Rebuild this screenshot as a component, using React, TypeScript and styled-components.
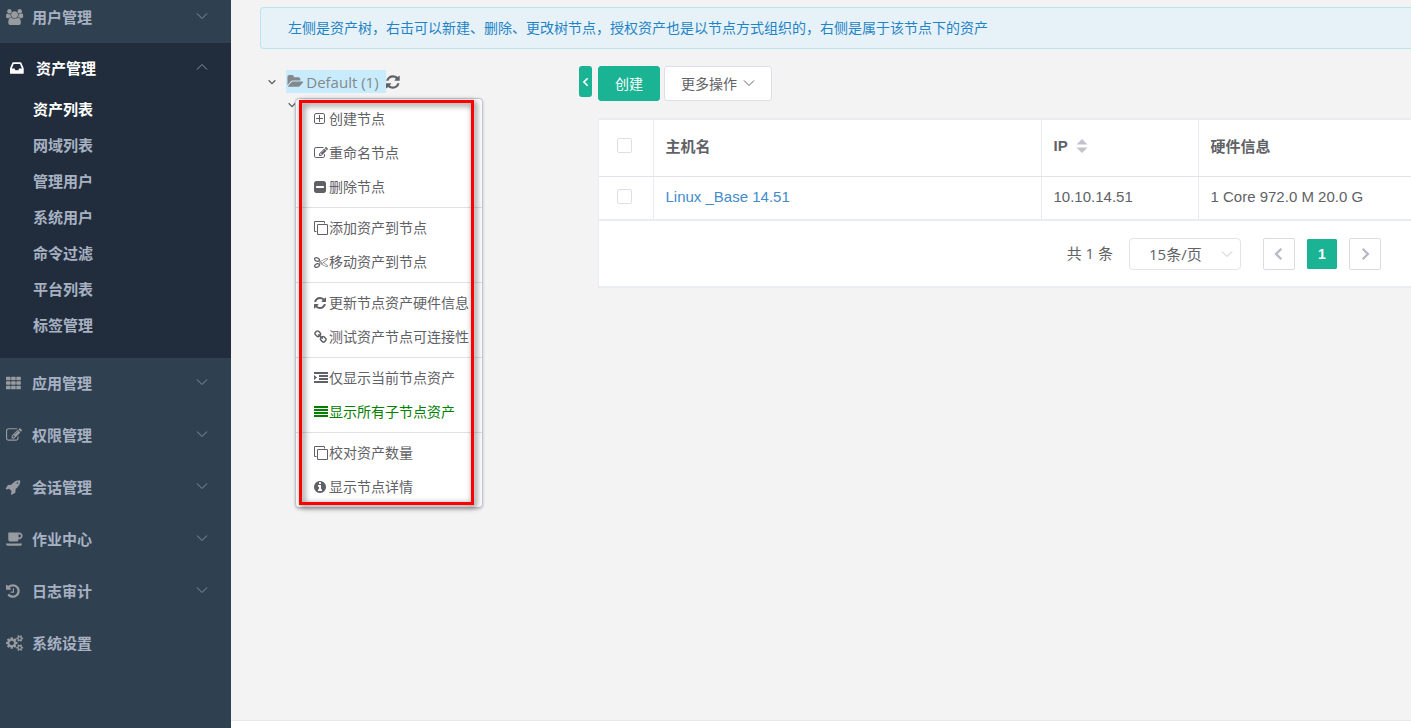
import React, { useState } from "react";
import styled, { createGlobalStyle, css } from "styled-components";

const GlobalStyle = createGlobalStyle`
  *, *::before, *::after { box-sizing: border-box; }
  body {
    margin: 0;
    background: #f3f3f3;
    color: #606266;
    font-family: "Open Sans", "Noto Sans CJK SC", sans-serif;
    font-size: 14px;
  }
  button, select, input { font: inherit; color: inherit; }
  button { cursor: pointer; }
  ul { list-style: none; margin: 0; padding: 0; }
`;

/* ---------- icons ---------- */

type Glyph = { x?: number; w: number; d: string };

const glyphs = {
  users: {
    w: 1920,
    d: "M593 896q-162 5-265 128h-134q-82 0-138-40.5t-56-118.5q0-353 124-353 6 0 43.5 21t97.5 42.5 119 21.5q67 0 133-23-5 37-5 66 0 159 90 293zm1071 637q0 120-73 189.5t-194 69.5h-874q-121 0-194-69.5t-73-189.5q0-53 3.5-103.5t14-109 26.5-108.5 43-97.5 62-81 85.5-53.5 111.5-20q10 0 43 21.5t73 48 107 48 135 21.5 135-21.5 107-48 73-48 43-21.5q61 0 111.5 20t85.5 53.5 62 81 43 97.5 26.5 108.5 14 109 3.5 103.5zm-1024-1277q0 106-75 181t-181 75-181-75-75-181 75-181 181-75 181 75 75 181zm704 384q0 159-112.5 271.5t-271.5 112.5-271.5-112.5-112.5-271.5 112.5-271.5 271.5-112.5 271.5 112.5 112.5 271.5zm576 225q0 78-56 118.5t-138 40.5h-134q-103-123-265-128 90-134 90-293 0-29-5-66 66 23 133 23 59 0 119-21.5t97.5-42.5 43.5-21q124 0 124 353zm-128-609q0 106-75 181t-181 75-181-75-75-181 75-181 181-75 181 75 75 181z",
  },
  inbox: {
    x: 128,
    w: 1536,
    d: "M1151 960h316q-1-3-2.5-8t-2.5-8l-212-496h-708l-212 496q-1 2-2.5 8t-2.5 8h316l95 192h320zm513 30v482q0 26-19 45t-45 19h-1408q-26 0-45-19t-19-45v-482q0-62 25-123l238-552q10-25 36.5-42t52.5-17h832q26 0 52.5 17t36.5 42l238 552q25 61 25 123z",
  },
  grid: {
    x: 64,
    w: 1664,
    d: [256, 768, 1280]
      .map((y) =>
        [64, 640, 1216]
          .map((x) => `M${x + 70} ${y - 64}h372q70 0 70 70v244q0 70-70 70h-372q-70 0-70-70v-244q0-70 70-70z`)
          .join("")
      )
      .join(""),
  },
  edit: {
    w: 1792,
    d: "M888 1184l116-116-152-152-116 116v56h96v96h56zm440-720q-16-16-33 1l-350 350q-17 17-1 33t33-1l350-350q17-17 1-33zm80 594v190q0 119-84.5 203.5t-203.5 84.5h-832q-119 0-203.5-84.5t-84.5-203.5v-832q0-119 84.5-203.5t203.5-84.5h832q63 0 117 25 15 7 18 23 3 17-9 29l-49 49q-14 14-32 8-23-6-45-6h-832q-66 0-113 47t-47 113v832q0 66 47 113t113 47h832q66 0 113-47t47-113v-126q0-13 9-22l64-64q15-15 35-7t20 29zm-96-738l288 288-672 672h-288v-288zm444 132l-92 92-288-288 92-92q28-28 68-28t68 28l152 152q28 28 28 68t-28 68z",
  },
  rocket: {
    x: 64,
    w: 1664,
    d: "M1440 448q0-40-28-68t-68-28-68 28-28 68 28 68 68 28 68-28 28-68zm224-288q0 249-75.5 430.5t-253.5 360.5q-81 80-195 176l-20 379q-2 16-16 26l-384 224q-7 4-16 4-12 0-23-9l-64-64q-13-14-8-32l85-276-281-281-276 85q-3 1-9 1-14 0-23-9l-64-64q-17-19-5-39l224-384q10-14 26-16l379-20q96-114 176-195 188-187 358-258t431-71q14 0 24 9.5t10 22.5z",
  },
  coffee: {
    w: 1920,
    d: "M1664 544q0-80-56-136t-136-56h-64v384h64q80 0 136-56t56-136zm-1664 864h1792q0 106-75 181t-181 75h-1280q-106 0-181-75t-75-181zm1856-864q0 159-112.5 271.5t-271.5 112.5h-64v32q0 92-66 158t-158 66h-704q-92 0-158-66t-66-158v-736q0-26 19-45t45-19h1152q159 0 271.5 112.5t112.5 271.5z",
  },
  history: {
    x: 128,
    w: 1536,
    d: "M1664 896q0 156-61 298t-164 245-245 164-298 61q-172 0-327-72.5t-264-204.5q-7-10-6.5-22.5t8.5-20.5l137-138q10-9 25-9 16 2 23 12 73 95 179 147t225 52q104 0 198.5-40.5t163.5-109.5 109.5-163.5 40.5-198.5-40.5-198.5-109.5-163.5-163.5-109.5-198.5-40.5q-98 0-188 35.5t-160 101.5l137 138q31 30 14 69-17 40-59 40h-448q-26 0-45-19t-19-45v-448q0-42 40-59 39-17 69 14l130 129q107-101 244.5-156.5t284.5-55.5q156 0 298 61t245 164 164 245 61 298zm-640-288v448q0 14-9 23t-23 9h-320q-14 0-23-9t-9-23v-64q0-14 9-23t23-9h224v-352q0-14 9-23t23-9h64q14 0 23 9t9 23z",
  },
  cogs: {
    w: 1920,
    d: "M896 896q0-106-75-181t-181-75-181 75-75 181 75 181 181 75 181-75 75-181zm768 512q0-52-38-90t-90-38-90 38-38 90q0 53 37.5 90.5t90.5 37.5 90.5-37.5 37.5-90.5zm0-1024q0-52-38-90t-90-38-90 38-38 90q0 53 37.5 90.5t90.5 37.5 90.5-37.5 37.5-90.5zm-384 421v185q0 10-7 19.5t-16 10.5l-155 24q-11 35-32 76 34 48 90 115 7 11 7 20 0 12-7 19-23 30-82.5 89.5t-78.5 59.5q-11 0-21-7l-115-90q-37 19-77 31-11 108-23 155-7 24-30 24h-186q-11 0-20-7.5t-10-17.5l-23-153q-34-10-75-31l-118 89q-7 7-20 7-11 0-21-8-144-133-144-160 0-9 7-19 10-14 41-53t47-61q-23-44-35-82l-152-24q-10-1-17-9.5t-7-19.5v-185q0-10 7-19.5t16-10.5l155-24q11-35 32-76-34-48-90-115-7-11-7-20 0-12 7-20 22-30 82-89t79-59q11 0 21 7l115 90q34-18 77-32 11-108 23-154 7-24 30-24h186q11 0 20 7.5t10 17.5l23 153q34 10 75 31l118-89q8-7 20-7 11 0 21 8 144 133 144 160 0 8-7 19-12 16-42 54t-45 60q23 48 34 82l152 23q10 2 17 10.5t7 19.5zm640 533v140q0 16-149 31-12 27-30 52 51 113 51 138 0 4-4 7-122 71-124 71-8 0-46-47t-52-68q-20 2-30 2t-30-2q-14 21-52 68t-46 47q-2 0-124-71-4-3-4-7 0-25 51-138-18-25-30-52-149-15-149-31v-140q0-16 149-31 13-29 30-52-51-113-51-138 0-4 4-7 4-2 35-20t59-34 30-16q8 0 46 46.5t52 67.5q20-2 30-2t30 2q51-71 92-112l6-2q4 0 124 70 4 3 4 7 0 25-51 138 17 23 30 52 149 15 149 31zm0-1024v140q0 16-149 31-12 27-30 52 51 113 51 138 0 4-4 7-122 71-124 71-8 0-46-47t-52-68q-20 2-30 2t-30-2q-14 21-52 68t-46 47q-2 0-124-71-4-3-4-7 0-25 51-138-18-25-30-52-149-15-149-31v-140q0-16 149-31 13-29 30-52-51-113-51-138 0-4 4-7 4-2 35-20t59-34 30-16q8 0 46 46.5t52 67.5q20-2 30-2t30 2q51-71 92-112l6-2q4 0 124 70 4 3 4 7 0 25-51 138 17 23 30 52 149 15 149 31z",
  },
  folder: {
    w: 1824,
    d: "M1815 952q0 31-31 66l-336 396q-43 51-120.5 86.5t-143.5 35.5h-1088q-34 0-60.5-13t-26.5-43q0-31 31-66l336-396q43-51 120.5-86.5t143.5-35.5h1088q34 0 60.5 13t26.5 43zm-343-344v160h-832q-94 0-197 47.5t-164 119.5l-337 396-5 6q0-4-.5-12.5t-.5-12.5v-960q0-92 66-158t158-66h320q92 0 158 66t66 158v32h544q92 0 158 66t66 158z",
  },
  refresh: {
    x: 128,
    w: 1536,
    d: "M1639 1056q0 5-1 7-64 268-268 434.5t-478 166.5q-146 0-282.5-55t-243.5-157l-129 129q-19 19-45 19t-45-19-19-45v-448q0-26 19-45t45-19h448q26 0 45 19t19 45-19 45l-137 137q71 66 161 102t187 36q134 0 250-65t186-179q11-17 53-117 8-23 30-23h192q13 0 22.5 9.5t9.5 22.5zm25-800v448q0 26-19 45t-45 19h-448q-26 0-45-19t-19-45 19-45l138-138q-148-137-349-137-134 0-250 65t-186 179q-11 17-53 117-8 23-30 23h-199q-13 0-22.5-9.5t-9.5-22.5v-7q65-268 270-434.5t480-166.5q146 0 284 55.5t245 156.5l130-129q19-19 45-19t45 19 19 45z",
  },
  plusBox: {
    x: 128,
    w: 1408,
    d: "M416 128h832q119 0 203.500 84.500t84.500 203.500v832q0 119-84.500 203.500t-203.500 84.500h-832q-119 0-203.500-84.500t-84.500-203.500v-832q0-119 84.500-203.500t203.500-84.500zm0 128q-66 0-113 47t-47 113v832q0 66 47 113t113 47h832q66 0 113-47t47-113v-832q0-66-47-113t-113-47zM768 384h128v384h384v128h-384v384h-128v-384h-384v-128h384z",
  },
  minusBox: {
    x: 128,
    w: 1536,
    d: "M1408 960v-128q0-26-19-45t-45-19h-896q-26 0-45 19t-19 45v128q0 26 19 45t45 19h896q26 0 45-19t19-45zm256-544v960q0 119-84.500 203.500t-203.500 84.500h-960q-119 0-203.500-84.500t-84.500-203.500v-960q0-119 84.500-203.500t203.500-84.500h960q119 0 203.500 84.500t84.500 203.500z",
  },
  clone: {
    w: 1792,
    d: "M1664 1632v-1088q0-13-9.500-22.500t-22.500-9.500h-1088q-13 0-22.500 9.500t-9.500 22.500v1088q0 13 9.500 22.500t22.500 9.500h1088q13 0 22.500-9.500t9.500-22.500zm128-1088v1088q0 66-47 113t-113 47h-1088q-66 0-113-47t-47-113v-1088q0-66 47-113t113-47h1088q66 0 113 47t47 113zm-384-384v160h-128v-160q0-13-9.500-22.500t-22.500-9.500h-1088q-13 0-22.500 9.500t-9.500 22.500v1088q0 13 9.500 22.500t22.500 9.500h160v128h-160q-66 0-113-47t-47-113v-1088q0-66 47-113t113-47h1088q66 0 113 47t47 113z",
  },
  cut: {
    w: 1792,
    d: "M960 896q26 0 45 19t19 45-19 45-45 19-45-19-19-45 19-45 45-19zm300 64l507 398q28 20 25 56-5 35-35 51l-128 64q-13 7-29 7-17 0-31-8l-690-387-110 66q-8 4-12 5 14 49 10 97-7 77-56 147.500t-132 123.500q-132 84-277 84-136 0-222-78-90-84-79-207 7-76 56-147t131-124q132-84 278-84 83 0 151 31 9-13 22-22l122-73-122-73q-13-9-22-22-68 31-151 31-146 0-278-84-82-53-131-124t-56-147q-5-59 15.500-113t63.500-93q85-79 222-79 145 0 277 84 83 52 132 123t56 148q4 48-10 97 4 1 12 5l110 66 690-387q14-8 31-8 16 0 29 7l128 64q30 16 35 51 3 36-25 56zm-681-260q46-42 21-108t-106-117q-92-59-192-59-74 0-113 36-46 42-21 108t106 117q92 59 192 59 74 0 113-36zm-85 745q81-51 106-117t-21-108q-39-36-113-36-100 0-192 59-81 51-106 117t21 108q39 36 113 36 100 0 192-59zm178-613l96 58v-11q0-36 33-56l14-8-79-47-26 26q-3 3-10 11t-12 12q-2 2-4 3.500t-3 2.500zm224 224l96 32 736-576-128-64-768 431v113l-160 96 9 8q2 2 7 6 4 4 11 12t11 12l26 26zm704 416l128-64-520-408-177 138q-2 3-13 7z",
  },
  link: {
    x: 64,
    w: 1664,
    d: "M1520 1216q0-40-28-68l-208-208q-28-28-68-28-42 0-72 32 3 3 19 18.500t21.500 21.500 15 19 13 25.500 3.500 27.500q0 40-28 68t-68 28q-15 0-27.500-3.500t-25.500-13-19-15-21.500-21.500-18.500-19q-33 31-33 73 0 40 28 68l206 207q27 27 68 27 40 0 68-26l147-146q28-28 28-67zm-703-705q0-40-28-68l-206-207q-28-28-68-28-39 0-68 27l-147 146q-28 28-28 67 0 40 28 68l208 208q27 27 68 27 42 0 72-31-3-3-19-18.500t-21.500-21.500-15-19-13-25.500-3.500-27.500q0-40 28-68t68-28q15 0 27.500 3.500t25.500 13 19 15 21.500 21.500 18.500 19q33-31 33-73zm895 705q0 120-85 203l-147 146q-83 83-203 83-121 0-204-85l-206-207q-83-83-83-203 0-123 88-209l-88-88q-86 88-208 88-120 0-204-84l-208-208q-84-84-84-204t85-203l147-146q83-83 203-83 121 0 204 85l206 207q83 83 83 203 0 123-88 209l88 88q86-88 208-88 120 0 204 84l208 208q84 84 84 204z",
  },
  indent: {
    w: 1792,
    d: "M0 128h1792v256H0zM640 512h1152v256H640zM640 896h1152v256H640zM0 1280h1792v256H0zM0 512l384 320-384 320z",
  },
  lines: {
    w: 1792,
    d: "M0 128h1792v256H0zM0 512h1792v256H0zM0 896h1792v256H0zM0 1280h1792v256H0z",
  },
  info: {
    x: 128,
    w: 1536,
    d: "M1152 1376v-160q0-14-9-23t-23-9h-96v-512q0-14-9-23t-23-9h-320q-14 0-23 9t-9 23v160q0 14 9 23t23 9h96v320h-96q-14 0-23 9t-9 23v160q0 14 9 23t23 9h448q14 0 23-9t9-23zm-128-896v-160q0-14-9-23t-23-9h-192q-14 0-23 9t-9 23v160q0 14 9 23t23 9h192q14 0 23-9t9-23zm640 416q0 209-103 385.500t-279.500 279.500-385.500 103-385.500-103-279.500-279.500-103-385.500 103-385.500 279.500-279.500 385.500-103 385.500 103 279.500 279.500 103 385.500z",
  },
} satisfies Record<string, Glyph>;

type GlyphName = keyof typeof glyphs;

const Svg = styled.svg`
  display: block;
  flex: none;
  overflow: visible;
`;

function Icon({ name, size }: { name: GlyphName; size: number }) {
  const g: Glyph = glyphs[name];
  return (
    <Svg
      width={(size * g.w) / 1792}
      height={size}
      viewBox={`${g.x ?? 0} 0 ${g.w} 1792`}
      fill="currentColor"
      fillRule={name === "plusBox" ? "evenodd" : "nonzero"}
      aria-hidden
    >
      <path d={g.d} />
    </Svg>
  );
}

const chevrons = {
  down: "M1 3.500l5 5 5-5",
  up: "M1 8.500l5-5 5 5",
  left: "M8 1.500L3.500 6 8 10.500",
  right: "M4 1.500L8.500 6 4 10.500",
};

function Chevron({ dir, size = 12, weight = 1 }: { dir: keyof typeof chevrons; size?: number; weight?: number }) {
  return (
    <Svg width={size} height={size} viewBox="0 0 12 12" fill="none" stroke="currentColor" strokeWidth={weight} aria-hidden>
      <path d={chevrons[dir]} />
    </Svg>
  );
}

/* ---------- page frame ---------- */

const Page = styled.div`
  display: flex;
  min-height: 100vh;
`;

const Sidebar = styled.nav`
  flex: 0 0 231px;
  overflow: hidden;
  background: #2f4050;
  color: #a7b1c2;
  font-size: 15px;
  font-weight: 700;
`;

const NavList = styled.ul`
  margin-top: -9px;
`;

const NavGroup = styled.li<{ $open?: boolean }>`
  ${(p) =>
    p.$open &&
    css`
      margin-bottom: -1px;
      padding: 2px 0 15px;
      background: #212d3c;
    `}
`;

const NavHeader = styled.button<{ $open?: boolean }>`
  display: flex;
  align-items: center;
  width: 100%;
  height: ${(p) => (p.$open ? 46 : 52)}px;
  padding: 0 23px 0 ${(p) => (p.$open ? 10 : 6)}px;
  border: 0;
  background: none;
  text-align: left;
  color: ${(p) => (p.$open ? "#ffffff" : "inherit")};
`;

const NavIcon = styled.span<{ $open?: boolean }>`
  flex: 0 0 26px;
  color: ${(p) => (p.$open ? "#ffffff" : "#989ba0")};
`;

const NavLabel = styled.span`
  flex: 1;
  padding-bottom: 2px;
`;

const NavArrow = styled.span`
  padding-bottom: 2px;
  color: #8b929b;
`;

const SubLink = styled.a<{ $active?: boolean }>`
  display: block;
  padding-left: 33px;
  line-height: 36px;
  color: ${(p) => (p.$active ? "#ffffff" : "inherit")};
  text-decoration: none;
`;

const Main = styled.main`
  flex: 1;
  min-width: 0;
  display: flex;
  flex-direction: column;
`;

const Notice = styled.p`
  margin: 7px 0 0 29px;
  padding: 0 27px;
  border: 1px solid #b9e6ee;
  border-right: 0;
  border-radius: 4px 0 0 4px;
  background: #e7f2f8;
  color: #1f83c6;
  line-height: 40px;
`;

const Workspace = styled.div`
  flex: 1;
  display: flex;
  align-items: flex-start;
  padding: 17px 0 0 37px;
`;

const Footer = styled.footer`
  height: 8px;
  border-top: 1px solid #e7eaec;
  background: #ffffff;
`;

/* ---------- tree ---------- */

const TreePane = styled.div`
  position: relative;
  flex: 0 0 311px;
  padding-top: 4px;
`;

const TreeRow = styled.div<{ $child?: boolean }>`
  display: flex;
  align-items: center;
  height: 23px;
  padding-left: ${(p) => (p.$child ? 20 : 0)}px;
`;

const PlainButton = styled.button`
  display: flex;
  padding: 0;
  border: 0;
  background: none;
`;

const TreeNode = styled.button`
  display: flex;
  align-items: center;
  gap: 3px;
  height: 23px;
  margin-left: 10px;
  padding: 0 7px 0 2px;
  border: 0;
  background: #c9ecfd;
  color: #84888c;
  font-size: 15px;
`;

const ContextMenu = styled.div`
  position: absolute;
  left: 27px;
  top: 32px;
  width: 188px;
  padding: 3px 0;
  border: 1px solid #c3c8d2;
  border-radius: 4px;
  background: #ffffff;
  box-shadow: 0 1px 3px rgba(0, 0, 0, 0.2);
`;

const MenuGroup = styled.ul`
  & + & {
    margin-top: 3px;
    padding-top: 3px;
    border-top: 1px solid #dfe1e4;
  }
`;

const MenuItem = styled.button<{ $on?: boolean }>`
  display: flex;
  align-items: center;
  width: 100%;
  height: 34px;
  padding: 0 0 0 18px;
  border: 0;
  background: none;
  white-space: nowrap;
  color: ${(p) => (p.$on ? "#008000" : "#5f6166")};
`;

const MenuIcon = styled.span`
  flex: 0 0 15px;
`;

const MenuLabel = styled.span`
  padding-bottom: 2px;
`;

const Highlight = styled.div`
  position: absolute;
  inset: 1px 8px 2px 3px;
  border: 3px solid #ff0000;
  filter: drop-shadow(2px 2px 3px rgba(0, 0, 0, 0.65));
  pointer-events: none;
`;

/* ---------- asset list ---------- */

const Collapse = styled.button`
  flex: 0 0 13px;
  display: flex;
  align-items: center;
  justify-content: center;
  height: 31px;
  margin-right: 6px;
  padding: 0;
  border: 0;
  border-radius: 3px;
  background: #1ab394;
  color: #ffffff;
`;

const ListPane = styled.section`
  flex: 1;
  min-width: 0;
`;

const Toolbar = styled.div`
  display: flex;
  gap: 4px;
  margin-bottom: 17px;
`;

const ToolButton = styled.button<{ $primary?: boolean }>`
  display: flex;
  align-items: center;
  gap: 6px;
  height: 35px;
  padding: 0 16px 2px;
  border: 1px solid ${(p) => (p.$primary ? "#1ab394" : "#dcdfe6")};
  border-radius: 3px;
  background: ${(p) => (p.$primary ? "#1ab394" : "#ffffff")};
  color: ${(p) => (p.$primary ? "#ffffff" : "#606266")};
`;

const Card = styled.div`
  border: solid #e9edf3;
  border-width: 2px 0 2px 1px;
  background: #ffffff;
`;

const Table = styled.table`
  width: 100%;
  table-layout: fixed;
  border-collapse: collapse;
  font-family: "Liberation Sans", "Noto Sans CJK SC", sans-serif;
  font-size: 15px;
  border-bottom: 2px solid #e9edf3;
`;

const cell = css`
  padding: 0 12px 2px;
  border-left: 1px solid #e8ebf1;
  text-align: left;
  &:first-child {
    padding-left: 18px;
    border-left: 0;
  }
`;

const HeadCell = styled.th`
  ${cell}
  height: 56px;
  padding-bottom: 4px;
  border-bottom: 1px solid #e0e4ea;
`;

const Cell = styled.td`
  ${cell}
  height: 44px;
`;

const SortLabel = styled.span`
  display: flex;
  align-items: center;
  gap: 8px;
`;

const AssetLink = styled.a`
  color: #428bca;
  text-decoration: none;
`;

const Check = styled.input`
  display: block;
  appearance: none;
  width: 15px;
  height: 15px;
  margin: 0;
  border: 1px solid #dcdfe6;
  border-radius: 2px;
  background: #ffffff;
  &:checked {
    background: #1ab394;
  }
`;

const Pager = styled.div`
  display: flex;
  align-items: center;
  justify-content: flex-end;
  padding: 17px 30px 16px 0;
`;

const Total = styled.span`
  margin-right: 16px;
  padding-bottom: 4px;
  font-size: 15px;
`;

const SizeField = styled.label`
  position: relative;
  display: flex;
  align-items: center;
  margin-right: 22px;
`;

const SizeSelect = styled.select`
  appearance: none;
  width: 112px;
  height: 32px;
  padding: 0 24px 0 19px;
  border: 1px solid #e1e4ea;
  border-radius: 4px;
  background: #ffffff;
  font-size: 15px;
`;

const SizeArrow = styled.span`
  position: absolute;
  right: 8px;
  color: #c0c4cc;
  pointer-events: none;
`;

const PageButtons = styled.div`
  display: flex;
  gap: 11px;
`;

const PageButton = styled.button<{ $current?: boolean }>`
  display: flex;
  align-items: center;
  justify-content: center;
  width: 32px;
  height: 32px;
  padding: 0;
  border: 1px solid ${(p) => (p.$current ? "#ffffff" : "#d9dce6")};
  border-radius: 2px;
  background: ${(p) => (p.$current ? "#1ab394" : "#ffffff")};
  background-clip: padding-box;
  color: ${(p) => (p.$current ? "#ffffff" : "#b6bac3")};
  font-family: "Liberation Sans", sans-serif;
  font-weight: 700;
`;

/* ---------- data ---------- */

type NavEntry = { icon: GlyphName; label: string; children?: string[]; leaf?: boolean };

const nav: NavEntry[] = [
  { icon: "users", label: "用户管理" },
  {
    icon: "inbox",
    label: "资产管理",
    children: ["资产列表", "网域列表", "管理用户", "系统用户", "命令过滤", "平台列表", "标签管理"],
  },
  { icon: "grid", label: "应用管理" },
  { icon: "edit", label: "权限管理" },
  { icon: "rocket", label: "会话管理" },
  { icon: "coffee", label: "作业中心" },
  { icon: "history", label: "日志审计" },
  { icon: "cogs", label: "系统设置", leaf: true },
];

type Action = { icon: GlyphName; label: string; on?: boolean };

const menu: Action[][] = [
  [
    { icon: "plusBox", label: "创建节点" },
    { icon: "edit", label: "重命名节点" },
    { icon: "minusBox", label: "删除节点" },
  ],
  [
    { icon: "clone", label: "添加资产到节点" },
    { icon: "cut", label: "移动资产到节点" },
  ],
  [
    { icon: "refresh", label: "更新节点资产硬件信息" },
    { icon: "link", label: "测试资产节点可连接性" },
  ],
  [
    { icon: "indent", label: "仅显示当前节点资产" },
    { icon: "lines", label: "显示所有子节点资产", on: true },
  ],
  [
    { icon: "clone", label: "校对资产数量" },
    { icon: "info", label: "显示节点详情" },
  ],
];

const assets = [{ name: "Linux _Base 14.51", ip: "10.10.14.51", hardware: "1 Core 972.0 M 20.0 G" }];

export default function App() {
  const [selected, setSelected] = useState<string[]>([]);
  const toggle = (name: string) =>
    setSelected((s) => (s.includes(name) ? s.filter((n) => n !== name) : [...s, name]));

  return (
    <Page>
      <GlobalStyle />
      <Sidebar>
        <NavList>
          {nav.map((entry) => {
            const open = !!entry.children;
            return (
              <NavGroup key={entry.label} $open={open}>
                <NavHeader $open={open} aria-expanded={entry.leaf ? undefined : open}>
                  <NavIcon $open={open}>
                    <Icon name={entry.icon} size={16} />
                  </NavIcon>
                  <NavLabel>{entry.label}</NavLabel>
                  {!entry.leaf && (
                    <NavArrow>
                      <Chevron dir={open ? "up" : "down"} />
                    </NavArrow>
                  )}
                </NavHeader>
                {entry.children && (
                  <ul>
                    {entry.children.map((child, i) => (
                      <li key={child}>
                        <SubLink href="#" $active={i === 0}>
                          {child}
                        </SubLink>
                      </li>
                    ))}
                  </ul>
                )}
              </NavGroup>
            );
          })}
        </NavList>
      </Sidebar>

      <Main>
        <Notice>
          左侧是资产树，右击可以新建、删除、更改树节点，授权资产也是以节点方式组织的，右侧是属于该节点下的资产
        </Notice>

        <Workspace>
          <TreePane>
            <TreeRow>
              <PlainButton aria-label="折叠">
                <Chevron dir="down" size={8} weight={2} />
              </PlainButton>
              <TreeNode>
                <Icon name="folder" size={15} />
                Default (1)
              </TreeNode>
              <PlainButton aria-label="刷新">
                <Icon name="refresh" size={16} />
              </PlainButton>
            </TreeRow>
            <TreeRow $child>
              <PlainButton aria-label="折叠">
                <Chevron dir="down" size={8} weight={2} />
              </PlainButton>
            </TreeRow>
            <ContextMenu>
              {menu.map((group) => (
                <MenuGroup key={group[0].label}>
                  {group.map((action) => (
                    <li key={action.label}>
                      <MenuItem $on={action.on}>
                        <MenuIcon>
                          <Icon name={action.icon} size={14} />
                        </MenuIcon>
                        <MenuLabel>{action.label}</MenuLabel>
                      </MenuItem>
                    </li>
                  ))}
                </MenuGroup>
              ))}
              <Highlight />
            </ContextMenu>
          </TreePane>

          <Collapse aria-label="收起">
            <Chevron dir="left" size={10} weight={2} />
          </Collapse>

          <ListPane>
            <Toolbar>
              <ToolButton $primary>创建</ToolButton>
              <ToolButton>
                更多操作
                <Chevron dir="down" />
              </ToolButton>
            </Toolbar>

            <Card>
              <Table>
                <colgroup>
                  <col width={54} />
                  <col width={388} />
                  <col width={157} />
                  <col />
                </colgroup>
                <thead>
                  <tr>
                    <HeadCell>
                      <Check
                        type="checkbox"
                        aria-label="全选"
                        checked={selected.length === assets.length}
                        onChange={(e) => setSelected(e.target.checked ? assets.map((a) => a.name) : [])}
                      />
                    </HeadCell>
                    <HeadCell>主机名</HeadCell>
                    <HeadCell>
                      <SortLabel>
                        IP
                        <Svg width="12" height="14" viewBox="0 0 12 14" fill="#c0c4cc" aria-hidden>
                          <path d="M6 0l5.500 5.500H.5zM6 14L.5 8.500h11z" />
                        </Svg>
                      </SortLabel>
                    </HeadCell>
                    <HeadCell>硬件信息</HeadCell>
                  </tr>
                </thead>
                <tbody>
                  {assets.map((asset) => (
                    <tr key={asset.name}>
                      <Cell>
                        <Check
                          type="checkbox"
                          aria-label={asset.name}
                          checked={selected.includes(asset.name)}
                          onChange={() => toggle(asset.name)}
                        />
                      </Cell>
                      <Cell>
                        <AssetLink href="#">{asset.name}</AssetLink>
                      </Cell>
                      <Cell>{asset.ip}</Cell>
                      <Cell>{asset.hardware}</Cell>
                    </tr>
                  ))}
                </tbody>
              </Table>

              <Pager>
                <Total>共 1 条</Total>
                <SizeField>
                  <SizeSelect aria-label="每页条数" defaultValue="15">
                    <option value="15">15条/页</option>
                    <option value="25">25条/页</option>
                    <option value="50">50条/页</option>
                  </SizeSelect>
                  <SizeArrow>
                    <Chevron dir="down" />
                  </SizeArrow>
                </SizeField>
                <PageButtons>
                  <PageButton aria-label="上一页">
                    <Chevron dir="left" size={14} weight={2} />
                  </PageButton>
                  <PageButton $current>1</PageButton>
                  <PageButton aria-label="下一页">
                    <Chevron dir="right" size={14} weight={2} />
                  </PageButton>
                </PageButtons>
              </Pager>
            </Card>
          </ListPane>
        </Workspace>
        <Footer />
      </Main>
    </Page>
  );
}
